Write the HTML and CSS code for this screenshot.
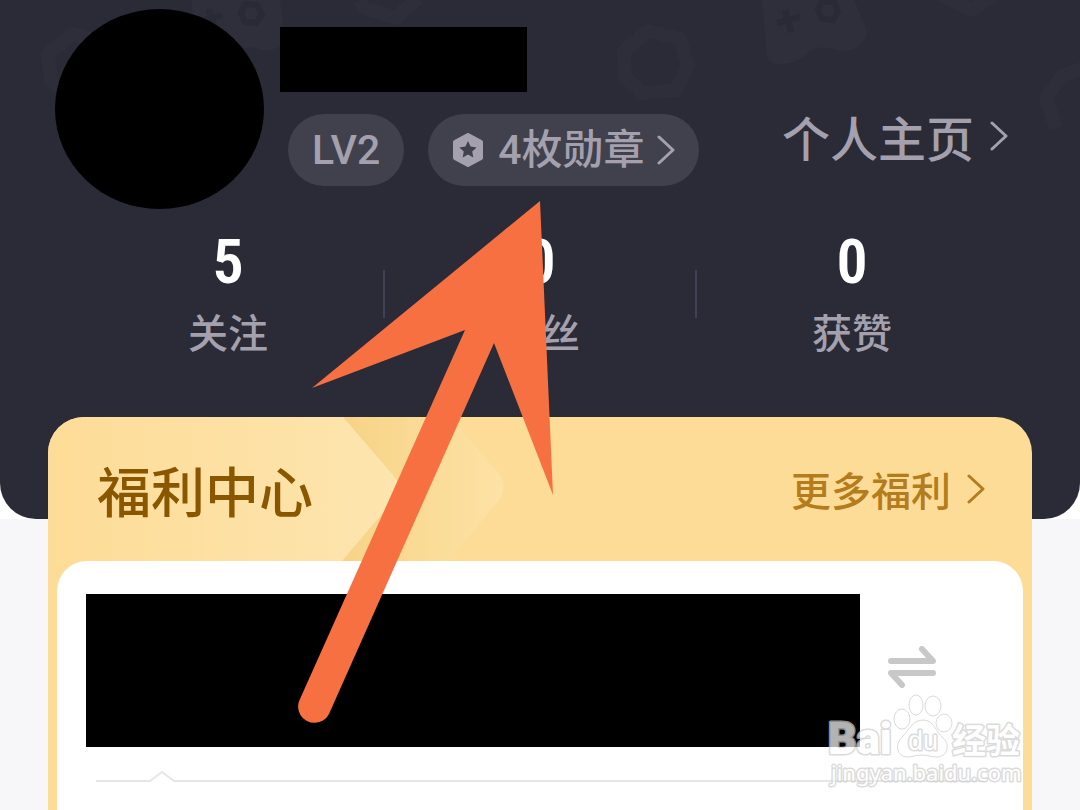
FILE: index.html
```html
<!DOCTYPE html>
<html lang="zh-CN">
<head>
<meta charset="UTF-8">
<meta name="viewport" content="width=device-width, initial-scale=1.0">
<title>我的</title>
<link rel="stylesheet" href="styles.css">
</head>
<body>
<main class="page">
    <div class="top">
        <header class="header">
            <svg class="pattern" width="1080" height="200" viewBox="0 0 1080 200" aria-hidden="true">
                <!-- nuts -->
                <g fill="none" stroke="#2d2e3a" stroke-width="14" stroke-linejoin="round">
                    <path d="M648 31l32 8 8 27-12 24-34 3-17-16-1-26z"/>
                    <path d="M72 34l34 8 8 27-12 24-34 3-17-16-3-26z"/>
                    <path d="M940-6l32 16 22-16"/>
                    <path d="M360 0l4 8 32 10 22-20"/>
                    <path d="M1090 66l-28 10-16 22 10 30"/>
                </g>
                <!-- gamepads -->
                <g fill="#2e2f3b">
                    <path d="M761-10l6 66q4 12 22 7 12-2 20-12 10-6 24-2 20 6 31-8 6-10-1-20L850-10z"/>
                    <path d="M190-10l6 54q4 12 22 7l36-4q20 10 31-8l-6-49z"/>
                </g>
                <g fill="none" stroke="#292a36" stroke-width="6">
                    <path d="M777 23l23-6M785 10l6 22"/>
                    <path d="M822 1l12 1 4 9-5 9-11-1-4-9z"/>
                    <path d="M245 4l12 1 5 9-6 9-11-1-4-9z"/>
                    <path d="M202 21l20-6M209 9l6 20"/>
                </g>
            </svg>
            <div class="profile">
                <div class="avatar"></div>
                <div class="info">
                    <div class="name"></div>
                    <div class="tags">
                        <span class="tag">LV2</span>
                        <a class="tag medal" href="#">
                            <svg width="32" height="36" viewBox="0 0 32 36" aria-hidden="true">
                                <path fill="#a4a0ae" stroke="#a4a0ae" stroke-width="4" stroke-linejoin="round" d="M16 3l13 7v16l-13 7-13-7V10z"/>
                                <path fill="#40414c" d="M16 9l2.600 5.600 6 .8-4.400 4.200 1.100 6-5.300-3-5.300 3 1.100-6-4.400-4.200 6-.8z"/>
                            </svg>
                            <span>4枚勋章</span>
                            <svg class="chevron" width="18" height="30" viewBox="0 0 18 30" aria-hidden="true"><path d="M2 2l14 13L2 28"/></svg>
                        </a>
                    </div>
                </div>
                <a class="home" href="#">
                    <span>个人主页</span>
                    <svg class="chevron" width="18" height="30" viewBox="0 0 18 30" aria-hidden="true"><path d="M2 2l14 13L2 28"/></svg>
                </a>
            </div>
            <ul class="stats">
                <li><b>5</b><span>关注</span></li>
                <li><b>0</b><span>粉丝</span></li>
                <li><b>0</b><span>获赞</span></li>
            </ul>
        </header>
    </div>

    <section class="welfare">
        <svg class="ribbon" width="460" height="144" viewBox="0 0 460 144" aria-hidden="true">
            <defs>
                <linearGradient id="light"><stop offset="0" stop-color="#fddc97"/><stop offset="1" stop-color="#fde5af"/></linearGradient>
                <linearGradient id="shade"><stop offset="0" stop-color="#f6d386"/><stop offset="0.500" stop-color="#fadb96"/><stop offset="1" stop-color="#fde2a6"/></linearGradient>
            </defs>
            <path fill="url(#shade)" d="M295 0h107l49 57q9 13 0 26l-51 61H295z"/>
            <path fill="url(#light)" d="M0 0h295l50 58q11 13 0 26l-51 60H0z"/>
        </svg>
        <div class="welfare-head">
            <h2>福利中心</h2>
            <a class="more" href="#">
                <span>更多福利</span>
                <svg class="chevron" width="18" height="30" viewBox="0 0 18 30" aria-hidden="true"><path d="M2 2l14 13L2 28"/></svg>
            </a>
        </div>
        <div class="panel">
            <div class="panel-row">
                <div class="banner"></div>
                <button class="swap" type="button" aria-label="切换">
                    <svg width="48" height="50" viewBox="0 0 48 50" fill="none" stroke="#c8c8c8" stroke-width="6" stroke-linecap="round" stroke-linejoin="round" aria-hidden="true">
                        <path d="M3 15h42L34 3M45 27H3l11 12"/>
                    </svg>
                </button>
            </div>
            <div class="divider">
                <svg width="90" height="12" viewBox="0 0 90 12" fill="none" stroke="#e6e6e6" stroke-width="2" aria-hidden="true">
                    <path d="M0 11h54l12-9 12 9h12"/>
                </svg>
            </div>
        </div>
    </section>

    <svg class="arrow" width="260" height="530" viewBox="0 0 260 530" aria-hidden="true">
        <path fill="#f77041" d="M242 1L14 188l153-58L2 499a16 16 0 0 0 29 15L196 143l59 152z"/>
    </svg>

    <svg class="watermark" width="200" height="100" viewBox="0 0 200 100" role="img" aria-label="Baidu经验">
        <g fill="#fff" stroke="#ccc" stroke-width="3" stroke-linejoin="round">
            <text class="wm-brand" x="2" y="61">Bai</text>
            <g stroke-width="1">
                <ellipse cx="76" cy="26" rx="8" ry="10"/>
                <ellipse cx="90" cy="12" rx="7" ry="10"/>
                <ellipse cx="107" cy="13" rx="8" ry="10"/>
                <ellipse cx="118" cy="30" rx="8" ry="9"/>
                <path d="M97 27c11 0 13 12 20 18 8 7 4 19-6 19-6 0-9-2-15-2s-10 2-15 2c-11-1-12-13-5-20 7-6 10-17 21-17z"/>
            </g>
            <text class="wm-du" x="82" y="57">du</text>
            <text class="wm-cn" x="126" y="60">经验</text>
            <text class="wm-url" x="5" y="88">jingyan.baidu.com</text>
        </g>
    </svg>
</main>
</body>
</html>
```
FILE: styles.css
```css
* {
    box-sizing: border-box;
}
body {
    margin: 0;
    background-color: #f7f7fa;
    font-family: Roboto, "Noto Sans CJK SC", sans-serif;
}
a {
    text-decoration: none;
    color: inherit;
}
.page {
    position: relative;
    min-height: 100vh;
    display: flex;
    flex-direction: column;
    overflow: hidden;
}

/* Cabecera */
.top {
    background-color: #fff;
}
.header {
    position: relative;
    padding: 9px 72px 146px 55px;
    background-color: #2a2b37;
    border-radius: 0 0 36px 36px;
    color: #a4a0ae;
    overflow: hidden;
}
.pattern {
    position: absolute;
    top: 0;
    left: 0;
}
.profile {
    position: relative;
    display: flex;
}
.avatar {
    width: 209px;
    height: 200px;
    flex: none;
    border-radius: 50%;
    background-color: #000;
}
.info {
    margin-left: 16px;
    padding-top: 18px;
}
.name {
    width: 247px;
    height: 65px;
    background-color: #000;
}
.tags {
    display: flex;
    gap: 24px;
    margin: 22px 0 0 8px;
}
.tag {
    height: 72px;
    padding: 0 24px;
    display: flex;
    align-items: center;
    border-radius: 36px;
    background-color: #40414c;
    font-size: 41px;
    font-weight: 500;
    line-height: 74px;
    white-space: nowrap;
}
.medal span {
    margin: 0 12px 0 14px;
}
.chevron {
    flex: none;
    fill: none;
    stroke: currentColor;
    stroke-width: 3;
    stroke-linecap: round;
    stroke-linejoin: round;
}
.home {
    height: 72px;
    margin: 91px 0 0 auto;
    display: flex;
    align-items: center;
    gap: 16px;
    font-size: 48px;
    font-weight: 500;
    white-space: nowrap;
}

/* Contadores */
.stats {
    position: relative;
    display: flex;
    margin: 18px 0 0 17px;
    padding: 0;
    list-style: none;
}
.stats li {
    position: relative;
    flex: 1;
    display: flex;
    flex-direction: column;
    align-items: center;
}
.stats li + li::before {
    content: "";
    position: absolute;
    left: -1px;
    top: 43px;
    width: 2px;
    height: 48px;
    background-color: #404252;
}
.stats b {
    color: #fff;
    font-family: "Roboto Condensed", "Liberation Sans Narrow", Roboto, sans-serif;
    font-size: 62px;
    font-weight: 600;
    line-height: 70px;
}
.stats span {
    font-size: 40px;
    font-weight: 500;
    line-height: 76px;
}

/* Centro de beneficios */
.welfare {
    position: relative;
    flex: 1;
    display: flex;
    flex-direction: column;
    margin: -102px 48px 0;
    padding: 0 9px;
    border-radius: 36px 36px 0 0;
    background-color: #fddc97;
    overflow: hidden;
}
.ribbon {
    position: absolute;
    top: 0;
    left: 0;
}
.welfare-head {
    position: relative;
    height: 144px;
    padding: 0 38px 0 40px;
    display: flex;
    align-items: center;
    justify-content: space-between;
}
.welfare-head h2 {
    margin: 0;
    color: #8a5600;
    font-size: 54px;
    font-weight: 500;
}
.more {
    display: flex;
    align-items: center;
    gap: 16px;
    color: #b47c1c;
    font-size: 40px;
    font-weight: 500;
}
.panel {
    position: relative;
    flex: 1;
    padding: 33px 39px 0 29px;
    border-radius: 30px 30px 0 0;
    background-color: #fff;
}
.panel-row {
    display: flex;
    align-items: center;
    gap: 28px;
    padding-right: 48px;
}
.banner {
    flex: 1;
    height: 153px;
    background-color: #000;
}
.swap {
    padding: 0;
    border: none;
    background: none;
    cursor: pointer;
}
.swap svg {
    display: block;
}
.divider {
    display: flex;
    align-items: flex-end;
    margin: 23px 0 0 10px;
}
.divider::after {
    content: "";
    flex: 1;
    height: 2px;
    background-color: #e6e6e6;
}

/* Flecha y marca de agua */
.arrow {
    position: absolute;
    left: 298px;
    top: 200px;
}
.watermark {
    position: absolute;
    right: 54px;
    top: 693px;
    opacity: 0.7;
}
.watermark text {
    paint-order: stroke;
}
.wm-brand {
    font: 900 44px Roboto, sans-serif;
}
.wm-du {
    font: 27px "Liberation Sans", sans-serif;
}
.wm-cn {
    font: bold 34px "Noto Sans CJK SC", sans-serif;
}
.wm-url {
    font: 22px "Noto Sans", sans-serif;
}
```
